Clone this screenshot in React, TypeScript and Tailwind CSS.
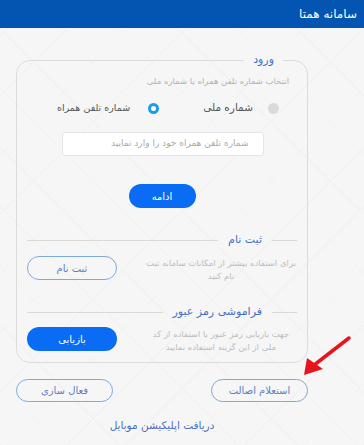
import React from "react";

const font = "font-['DejaVu_Sans',sans-serif]";

function SectionTitle({ title }: { title: string }) {
  return (
    <div className="flex items-center px-[10px]">
      <div className="w-[25px] h-px bg-[#d9d9d9]" />
      <span className="px-[10px] text-[11px] leading-[14px] text-[#3f6fc6]">{title}</span>
      <div className="flex-1 h-px bg-[#d9d9d9]" />
    </div>
  );
}

export default function App() {
  return (
    <div
      dir="rtl"
      className={`relative w-[364px] h-[445px] overflow-hidden bg-[#f6f6f6] bg-[repeating-linear-gradient(45deg,#f2f2f2_0,#f2f2f2_1px,transparent_1px,transparent_42px),repeating-linear-gradient(-45deg,#f2f2f2_0,#f2f2f2_1px,transparent_1px,transparent_42px)] ${font}`}
    >
      {/* هدر */}
      <header className="h-[28px] bg-[#0355b1] flex items-center px-[7px] text-white text-[12px]">
        سامانه همتا
      </header>

      <div className="pt-[25px] pr-[56px]">
        {/* کارت ورود */}
        <fieldset className="w-[292px] border border-[#dcdcdc] rounded-[14px] p-0 pb-[8px] m-0 min-w-0">
          <legend className="mr-[24px] px-[9px] text-[11px] leading-[14px] text-[#3f6fc6]">ورود</legend>

          <p className="mt-[8px] pr-[18px] text-[8.5px] leading-[12px] text-[#b3b3b3]">
            انتخاب شماره تلفن همراه یا شماره ملی
          </p>

          {/* رادیوها */}
          <div className="mt-[15px] flex items-center pr-[28px] h-[12px]">
            <span className="w-[11px] h-[11px] rounded-full bg-[#dadada]" />
            <span className="mr-[15px] text-[10.5px] text-[#555]">شماره ملی</span>
            <span className="mr-[44px] w-[11px] h-[11px] rounded-full border-[3px] border-[#1e9be8] bg-white" />
            <span className="mr-[18px] text-[9.5px] text-[#555]">شماره تلفن همراه</span>
          </div>

          <div className="mt-[18px] flex justify-center">
            <div className="mr-[-1px] w-[202px] h-[24px] bg-white border border-[#e5e5e5] rounded-[3px] flex items-center pr-[14px] text-[9px] text-[#aaa]">
              شماره تلفن همراه خود را وارد نمایید
            </div>
          </div>

          <div className="mt-[28px] flex justify-center">
            <button className="w-[67px] h-[24px] rounded-full bg-[#0a6cf5] text-white text-[10px]">ادامه</button>
          </div>

          {/* ثبت نام */}
          <div className="mt-[25px]">
            <SectionTitle title="ثبت نام" />
          </div>
          <div className="mt-[9px] flex items-start justify-between pr-[11px] pl-[10px]">
            <p className="w-[150px] text-[8.5px] leading-[13px] text-[#bdbdbd] text-center mt-[1px]">
              برای استفاده بیشتر از امکانات سامانه ثبت نام کنید
            </p>
            <button className="w-[90px] h-[24px] rounded-full border border-[#7ea9dc] text-[10px] text-[#5a7fc4]">ثبت نام</button>
          </div>

          {/* فراموشی رمز عبور */}
          <div className="mt-[22px]">
            <SectionTitle title="فراموشی رمز عبور" />
          </div>
          <div className="mt-[8px] flex items-start justify-between pr-[11px] pl-[10px]">
            <p className="w-[150px] text-[8.5px] leading-[13px] text-[#bdbdbd] text-center mt-[1px]">
              جهت بازیابی رمز عبور با استفاده از کد ملی از این گزینه استفاده نمایید
            </p>
            <button className="w-[90px] h-[24px] rounded-full bg-[#0a6cf5] text-[10px] text-white">بازیابی</button>
          </div>
        </fieldset>

        {/* دکمه‌های پایین */}
        <div className="mt-[16px] w-[292px] flex justify-between">
          <button className="w-[97px] h-[23px] rounded-full border border-[#7ea9dc] text-[10px] text-[#5a7fc4]">استعلام اصالت</button>
          <button className="w-[97px] h-[23px] rounded-full border border-[#7ea9dc] text-[10px] text-[#5a7fc4]">فعال سازی</button>
        </div>

        <div className="mt-[15px] w-[292px] text-center text-[10.5px] leading-[16px] text-[#4a6fc2]">دریافت اپلیکیشن موبایل</div>
      </div>

      {/* فلش قرمز */}
      <svg className="absolute left-0 top-0 pointer-events-none" width="364" height="445" viewBox="0 0 364 445">
        <line x1="349" y1="338" x2="309" y2="369" stroke="#e8141c" strokeWidth="3.5" strokeLinecap="round" />
        <polygon points="304,375 307,358 323,369" fill="#e8141c" />
      </svg>
    </div>
  );
}
